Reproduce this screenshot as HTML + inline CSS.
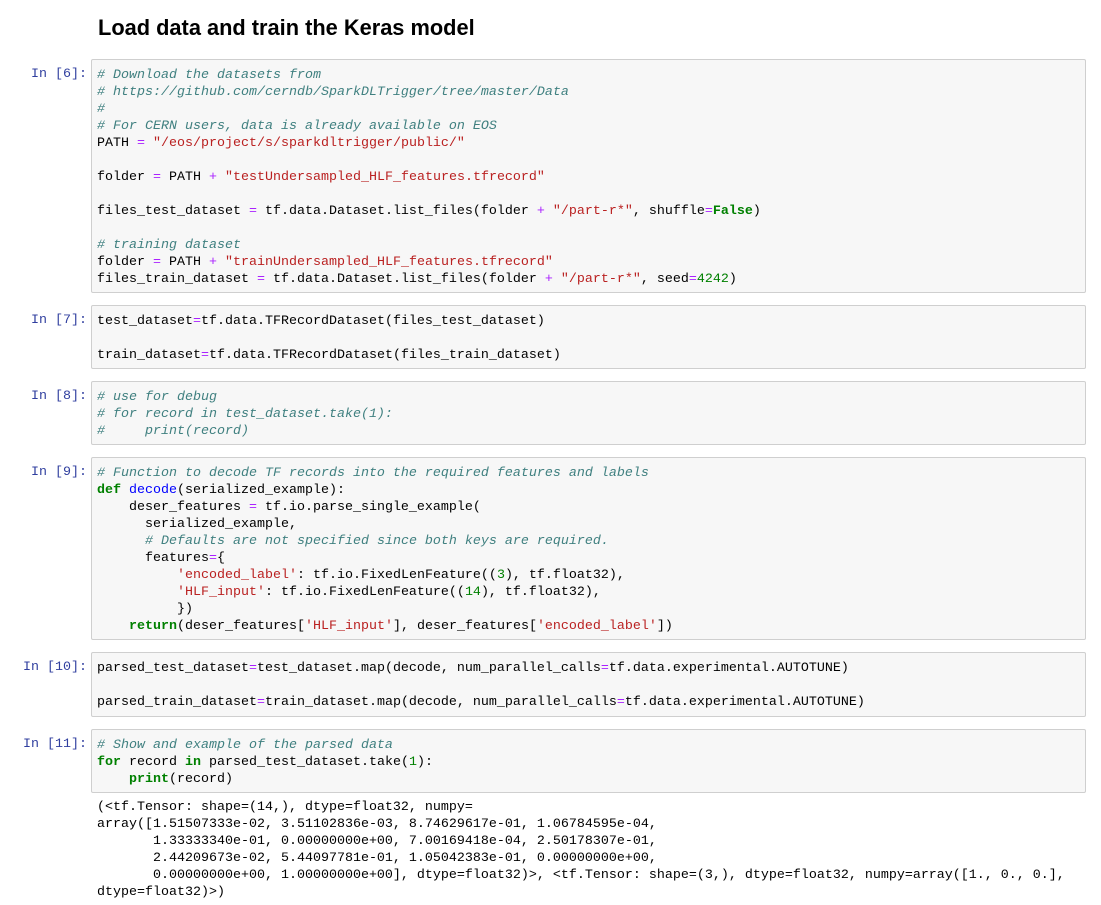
<!DOCTYPE html>
<html><head><meta charset="utf-8"><style>
body{margin:0;background:#fff;width:1101px;height:905px;overflow:hidden;position:relative;font-family:"Liberation Sans",sans-serif}
h1{position:absolute;left:98px;top:14px;margin:0;font-size:21.8px;font-weight:bold;color:#000;line-height:28px}
.p{position:absolute;right:1014px;font-family:"Liberation Mono",monospace;font-size:13.33px;color:#303F9F;line-height:17px;white-space:pre}
.c{position:absolute;left:91px;width:995px;background:#f7f7f7;border:1px solid #cfcfcf;border-radius:2px;box-sizing:border-box;padding:7px 0 0 5px}
pre{margin:0;font-family:"Liberation Mono",monospace;font-size:13.33px;line-height:17px;color:#000}
.o{position:absolute;left:97px}
.cm{color:#408080;font-style:italic}.s{color:#BA2121}.k{color:#008000;font-weight:bold}.op{color:#AA22FF}.n{color:#008000}.f{color:#0000FF}
</style></head><body>
<h1>Load data and train the Keras model</h1>

<div class="p" style="top:66px">In [6]:</div>
<div class="c" style="top:59px;height:234px"><pre><span class="cm"># Download the datasets from
# https://github.com/cerndb/SparkDLTrigger/tree/master/Data
#
# For CERN users, data is already available on EOS</span>
PATH <span class="op">=</span> <span class="s">"/eos/project/s/sparkdltrigger/public/"</span>

folder <span class="op">=</span> PATH <span class="op">+</span> <span class="s">"testUndersampled_HLF_features.tfrecord"</span>

files_test_dataset <span class="op">=</span> tf.data.Dataset.list_files(folder <span class="op">+</span> <span class="s">"/part-r*"</span>, shuffle<span class="op">=</span><span class="k">False</span>)

<span class="cm"># training dataset</span>
folder <span class="op">=</span> PATH <span class="op">+</span> <span class="s">"trainUndersampled_HLF_features.tfrecord"</span>
files_train_dataset <span class="op">=</span> tf.data.Dataset.list_files(folder <span class="op">+</span> <span class="s">"/part-r*"</span>, seed<span class="op">=</span><span class="n">4242</span>)</pre></div>

<div class="p" style="top:312px">In [7]:</div>
<div class="c" style="top:305px;height:64px"><pre>test_dataset<span class="op">=</span>tf.data.TFRecordDataset(files_test_dataset)

train_dataset<span class="op">=</span>tf.data.TFRecordDataset(files_train_dataset)</pre></div>

<div class="p" style="top:388px">In [8]:</div>
<div class="c" style="top:381px;height:64px"><pre><span class="cm"># use for debug
# for record in test_dataset.take(1):
#     print(record)</span></pre></div>

<div class="p" style="top:464px">In [9]:</div>
<div class="c" style="top:457px;height:183px"><pre><span class="cm"># Function to decode TF records into the required features and labels</span>
<span class="k">def</span> <span class="f">decode</span>(serialized_example):
    deser_features <span class="op">=</span> tf.io.parse_single_example(
      serialized_example,
      <span class="cm"># Defaults are not specified since both keys are required.</span>
      features<span class="op">=</span>{
          <span class="s">'encoded_label'</span>: tf.io.FixedLenFeature((<span class="n">3</span>), tf.float32),
          <span class="s">'HLF_input'</span>: tf.io.FixedLenFeature((<span class="n">14</span>), tf.float32),
          })
    <span class="k">return</span>(deser_features[<span class="s">'HLF_input'</span>], deser_features[<span class="s">'encoded_label'</span>])</pre></div>

<div class="p" style="top:659px">In [10]:</div>
<div class="c" style="top:652px;height:65px"><pre>parsed_test_dataset<span class="op">=</span>test_dataset.map(decode, num_parallel_calls<span class="op">=</span>tf.data.experimental.AUTOTUNE)

parsed_train_dataset<span class="op">=</span>train_dataset.map(decode, num_parallel_calls<span class="op">=</span>tf.data.experimental.AUTOTUNE)</pre></div>

<div class="p" style="top:736px">In [11]:</div>
<div class="c" style="top:729px;height:64px"><pre><span class="cm"># Show and example of the parsed data</span>
<span class="k">for</span> record <span class="k">in</span> parsed_test_dataset.take(<span class="n">1</span>):
    <span class="k">print</span>(record)</pre></div>

<pre class="o" style="top:799px">(&lt;tf.Tensor: shape=(14,), dtype=float32, numpy=
array([1.51507333e-02, 3.51102836e-03, 8.74629617e-01, 1.06784595e-04,
       1.33333340e-01, 0.00000000e+00, 7.00169418e-04, 2.50178307e-01,
       2.44209673e-02, 5.44097781e-01, 1.05042383e-01, 0.00000000e+00,
       0.00000000e+00, 1.00000000e+00], dtype=float32)&gt;, &lt;tf.Tensor: shape=(3,), dtype=float32, numpy=array([1., 0., 0.],
dtype=float32)&gt;)</pre>
</body></html>
